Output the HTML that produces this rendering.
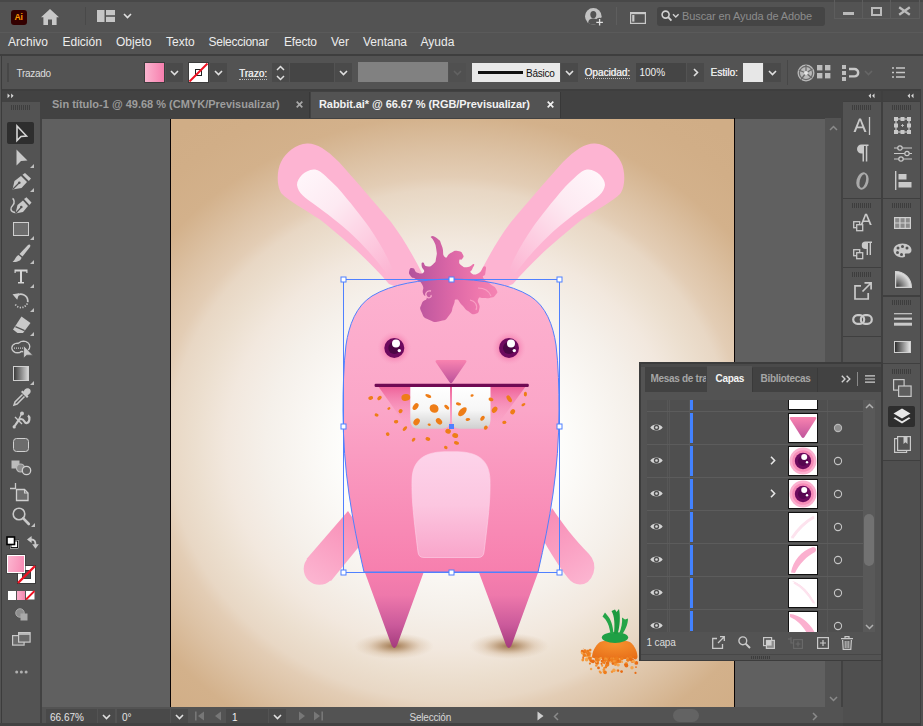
<!DOCTYPE html>
<html>
<head>
<meta charset="utf-8">
<title>Illustrator</title>
<style>
html,body{margin:0;padding:0;}
body{width:923px;height:726px;overflow:hidden;background:#535353;font-family:"Liberation Sans",sans-serif;font-size:12px;color:#e6e6e6;position:relative;}
.a{position:absolute;}
.t{position:absolute;white-space:nowrap;line-height:1;}
svg{position:absolute;overflow:visible;}

.mn{top:36px;font-size:12px;color:#ececec;}

.cb{top:67.6px;font-size:10px;color:#dedede;}
.cbl{border-bottom:1px dotted #bdbdbd;padding-bottom:0.8px;color:#e8e8e8;text-shadow:0.3px 0 0 #e8e8e8;}
.dd{background:#4a4a4a;}

.sb{top:713px;font-size:10px;color:#e4e4e4;}

.lt{top:374px;font-size:10px;font-weight:bold;letter-spacing:-0.3px;}
</style>
</head>
<body>
<!-- BASE REGIONS -->
<div class="a" id="titlebar" style="left:0;top:0;width:923px;height:32px;background:#535353;"></div>
<div class="a" id="menubar" style="left:0;top:32px;width:923px;height:22px;background:#535353;"></div>
<div class="a" style="left:0;top:54px;width:923px;height:2px;background:#3e3e3e;"></div>
<div class="a" id="ctrlbar" style="left:0;top:56px;width:923px;height:33px;background:#535353;"></div>
<div class="a" style="left:0;top:89px;width:923px;height:2px;background:#3e3e3e;"></div>


<!-- ===== TITLE BAR ===== -->
<div class="a" style="left:0;top:0;width:923px;height:2px;background:#484848;"></div>
<div class="a" style="left:11px;top:10px;width:16px;height:15px;background:#300;border-radius:3px;"></div>
<div class="t" style="left:14.6px;top:13.4px;font-size:8.6px;font-weight:bold;color:#ff9a00;letter-spacing:-0.2px;">Ai</div>
<svg style="left:41px;top:9px" width="18" height="16" viewBox="0 0 18 16"><path d="M9,0 L18,8.3 L15.6,8.3 L15.6,16 L11,16 L11,10.5 L7,10.5 L7,16 L2.4,16 L2.4,8.3 L0,8.3 Z" fill="#c8c8c8"/></svg>
<div class="a" style="left:85px;top:7px;width:1px;height:18px;background:#494949;"></div>
<svg style="left:97px;top:9.5px" width="18" height="12" viewBox="0 0 18 12"><rect x="0" y="0" width="7.5" height="12" fill="#c6c6c6"/><rect x="9" y="0" width="9" height="5.2" fill="#c6c6c6"/><rect x="9" y="6.8" width="9" height="5.2" fill="#c6c6c6"/></svg>
<svg style="left:122.5px;top:12.5px" width="9" height="6" viewBox="0 0 9 6"><path d="M1,1 L4.5,4.5 L8,1" stroke="#e0e0e0" stroke-width="1.6" fill="none"/></svg>
<!-- user icon -->
<svg style="left:584.5px;top:7.5px" width="20" height="19" viewBox="0 0 20 19"><circle cx="8.3" cy="8.3" r="8.3" fill="#c2c2c2"/><ellipse cx="8.3" cy="6.6" rx="3" ry="3.7" fill="#535353"/><path d="M3.2,14.8 C3.6,11.2 6,10.6 8.3,10.6 C10.6,10.6 13,11.2 13.4,14.8 C11.5,17 5.1,17 3.2,14.8Z" fill="#535353"/><circle cx="14.6" cy="14.2" r="4.4" fill="#535353"/><path d="M14.6,11 V17.6 M11.3,14.3 H17.9" stroke="#e0e0e0" stroke-width="1.3"/></svg>
<div class="a" style="left:616px;top:7px;width:1px;height:18px;background:#5e5e5e;"></div>
<svg style="left:630px;top:11.5px" width="16" height="12" viewBox="0 0 16 12"><rect x="0.6" y="0.6" width="14.8" height="10.8" fill="none" stroke="#c8c8c8" stroke-width="1.2"/><path d="M0.6,1.3 H15.4" stroke="#c8c8c8" stroke-width="1.8"/><rect x="2.2" y="3" width="2.2" height="6.6" fill="#c8c8c8"/></svg>
<div class="a" style="left:657px;top:7px;width:168px;height:19px;background:#454545;border-radius:3px;"></div>
<svg style="left:661px;top:10px" width="20" height="13" viewBox="0 0 20 13"><circle cx="4.6" cy="4.6" r="3.5" fill="none" stroke="#d0d0d0" stroke-width="1.6"/><path d="M7.2,7.2 L10.4,10.6" stroke="#d0d0d0" stroke-width="1.9"/><path d="M12,4.2 L14.8,7 L17.6,4.2" stroke="#d0d0d0" stroke-width="1.4" fill="none"/></svg>
<div class="t" style="left:682px;top:11px;font-size:11px;color:#8c8c8c;letter-spacing:-0.1px;">Buscar en Ayuda de Adobe</div>
<!-- window buttons -->
<div class="a" style="left:834px;top:-1px;width:86px;height:20px;border:1px solid #5d5d5d;box-sizing:border-box;"></div>
<div class="a" style="left:862px;top:0px;width:1px;height:18px;background:#5d5d5d;"></div>
<div class="a" style="left:890px;top:0px;width:1px;height:18px;background:#5d5d5d;"></div>
<div class="a" style="left:842.5px;top:12px;width:11px;height:3px;background:#bababa;"></div>
<div class="a" style="left:870.5px;top:6.5px;width:11px;height:9px;border:2px solid #bababa;border-top-width:2.5px;box-sizing:border-box;"></div>
<svg style="left:898px;top:6.5px" width="13" height="8" viewBox="0 0 13 8"><path d="M1.2,0.3 L11.8,7.7 M11.8,0.3 L1.2,7.7" stroke="#bababa" stroke-width="2.3"/></svg>
<div class="a" style="left:0;top:32px;width:923px;height:1px;background:#5a5a5a;"></div>

<!-- ===== MENU BAR ===== -->
<div class="t mn" style="left:8px;">Archivo</div>
<div class="t mn" style="left:62.5px;">Edición</div>
<div class="t mn" style="left:116px;">Objeto</div>
<div class="t mn" style="left:166px;">Texto</div>
<div class="t mn" style="left:208.5px;letter-spacing:-0.25px;">Seleccionar</div>
<div class="t mn" style="left:284px;letter-spacing:-0.2px;">Efecto</div>
<div class="t mn" style="left:331px;">Ver</div>
<div class="t mn" style="left:363px;">Ventana</div>
<div class="t mn" style="left:420.5px;">Ayuda</div>


<!-- ===== CONTROL BAR ===== -->
<div class="a" style="left:0;top:56px;width:2px;height:33px;background:#424242;"></div>
<div class="a" style="left:7px;top:63px;width:2px;height:18.5px;background:#474747;"></div>
<div class="t cb" style="left:16.5px;top:68.7px;letter-spacing:-0.3px;">Trazado</div>
<div class="a" style="left:145px;top:63px;width:19px;height:19px;background:linear-gradient(90deg,#fbb4cf,#f77fae);box-shadow:0 0 0 1px #3c3c3c;"></div>
<div class="a dd" style="left:166px;top:63px;width:17px;height:18.5px;"></div><svg style="left:170px;top:70px" width="9" height="6" viewBox="0 0 9 6"><path d="M1,1 L4.5,4.5 L8,1" stroke="#e0e0e0" stroke-width="1.6" fill="none"/></svg>
<div class="a" style="left:189px;top:63px;width:19px;height:19px;background:#fff;box-shadow:0 0 0 1px #3c3c3c;"></div>
<svg style="left:189px;top:63px" width="19" height="19" viewBox="0 0 19 19"><rect x="6.5" y="6.5" width="6" height="6" fill="none" stroke="#222" stroke-width="1"/><path d="M0.5,18.5 L18.5,0.5" stroke="#ee1122" stroke-width="2"/></svg>
<div class="a dd" style="left:210px;top:63px;width:17px;height:18.5px;"></div><svg style="left:214px;top:70px" width="9" height="6" viewBox="0 0 9 6"><path d="M1,1 L4.5,4.5 L8,1" stroke="#e0e0e0" stroke-width="1.6" fill="none"/></svg>
<div class="t cb cbl" style="left:239px;top:68.7px;">Trazo:</div>
<div class="a dd" style="left:272px;top:63px;width:17px;height:18.5px;"></div>
<svg style="left:276px;top:64.5px" width="9" height="16" viewBox="0 0 9 16"><path d="M1,5 L4.5,1.5 L8,5 M1,11 L4.5,14.5 L8,11" stroke="#e0e0e0" stroke-width="1.5" fill="none"/></svg>
<div class="a" style="left:290px;top:63px;width:44px;height:18.5px;background:#454545;"></div>
<div class="a dd" style="left:335px;top:63px;width:17px;height:18.5px;"></div><svg style="left:339px;top:70px" width="9" height="6" viewBox="0 0 9 6"><path d="M1,1 L4.5,4.5 L8,1" stroke="#e0e0e0" stroke-width="1.6" fill="none"/></svg>
<div class="a" style="left:358px;top:62.3px;width:90px;height:20px;background:#818181;"></div>
<div class="a" style="left:449px;top:63px;width:17px;height:18.5px;background:#505050;"></div><svg style="left:453px;top:70px" width="9" height="6" viewBox="0 0 9 6"><path d="M1,1 L4.5,4.5 L8,1" stroke="#626262" stroke-width="1.6" fill="none"/></svg>
<div class="a" style="left:472px;top:63px;width:88px;height:18.5px;background:#e9e9e9;"></div>
<div class="a" style="left:478px;top:71px;width:44.5px;height:3px;background:#111;"></div>
<div class="t" style="left:526px;top:68.5px;font-size:10px;color:#111;letter-spacing:-0.25px;">Básico</div>
<div class="a dd" style="left:561px;top:63px;width:17px;height:18.5px;"></div><svg style="left:565px;top:70px" width="9" height="6" viewBox="0 0 9 6"><path d="M1,1 L4.5,4.5 L8,1" stroke="#e0e0e0" stroke-width="1.6" fill="none"/></svg>
<div class="t cb cbl" style="left:584.5px;">Opacidad:</div>
<div class="a" style="left:636px;top:63px;width:50px;height:18.5px;background:#454545;"></div>
<div class="t cb" style="left:639.5px;color:#f0f0f0;">100%</div>
<div class="a dd" style="left:687px;top:63px;width:17px;height:18.5px;"></div>
<svg style="left:692.5px;top:68px" width="6" height="9" viewBox="0 0 6 9"><path d="M1,1 L4.5,4.5 L1,8" stroke="#e0e0e0" stroke-width="1.6" fill="none"/></svg>
<div class="t cb" style="left:710.5px;color:#e8e8e8;text-shadow:0.3px 0 0 #e8e8e8;">Estilo:</div>
<div class="a" style="left:743px;top:63px;width:20px;height:18.5px;background:#e7e7e7;"></div>
<div class="a dd" style="left:764px;top:63px;width:17px;height:18.5px;"></div><svg style="left:768px;top:70px" width="9" height="6" viewBox="0 0 9 6"><path d="M1,1 L4.5,4.5 L8,1" stroke="#e0e0e0" stroke-width="1.6" fill="none"/></svg>
<div class="a" style="left:787px;top:60px;width:1px;height:25px;background:#474747;"></div>
<!-- globe -->
<svg style="left:797px;top:63.5px" width="18" height="18" viewBox="0 0 18 18"><circle cx="9" cy="9" r="8.5" fill="#b9b9b9"/><circle cx="9" cy="9" r="6.6" fill="none" stroke="#6a6a6a" stroke-width="1.2"/><path d="M9,9 L9,1 M9,9 L15.5,5 M9,9 L15,14 M9,9 L4,15.5 M9,9 L1.6,6" stroke="#6a6a6a" stroke-width="1.3"/><circle cx="9" cy="9" r="2" fill="#e6e6e6"/></svg>
<svg style="left:817px;top:65px" width="14" height="14" viewBox="0 0 14 14"><rect x="0" y="0" width="5.4" height="5.4" fill="#bdbdbd"/><rect x="8" y="0" width="5.4" height="5.4" fill="#bdbdbd"/><rect x="0" y="8" width="5.4" height="5.4" fill="#bdbdbd"/><rect x="8" y="8" width="5.4" height="5.4" fill="#bdbdbd"/></svg>
<svg style="left:842px;top:64.5px" width="18" height="16" viewBox="0 0 18 16"><rect x="0" y="0" width="4" height="4" fill="#bdbdbd"/><rect x="0" y="6" width="4" height="4" fill="#bdbdbd"/><rect x="0" y="12" width="4" height="4" fill="#bdbdbd"/><path d="M7,4 H12.5 A3.6,3.6 0 0 1 12.5,11.4 H7" fill="none" stroke="#c8c8c8" stroke-width="2.4"/></svg>
<svg style="left:864px;top:70px" width="9" height="6" viewBox="0 0 9 6"><path d="M1,1 L4.5,4.5 L8,1" stroke="#666" stroke-width="1.6" fill="none"/></svg>
<svg style="left:892px;top:67px" width="13" height="11" viewBox="0 0 13 11"><path d="M0,1 H2 M4,1 H13 M0,5.5 H2 M4,5.5 H13 M0,10 H2 M4,10 H13" stroke="#c8c8c8" stroke-width="1.6"/></svg>

<!-- canvas area -->
<div class="a" id="paste" style="left:42px;top:118px;width:783px;height:589px;background:#606060;"></div>
<!-- tab strip -->
<div class="a" id="tabs" style="left:42px;top:91px;width:799px;height:27.6px;background:#424242;"></div>

<!-- ARTBOARD -->
<div class="a" id="art" style="left:171px;top:118px;width:564px;height:589px;overflow:hidden;background:#e8d6c0;">
<svg id="artsvg" style="left:0;top:0" width="564" height="589" viewBox="171 118 564 589">
<defs>
<radialGradient id="bg" cx="451" cy="445" r="400" gradientUnits="userSpaceOnUse" gradientTransform="translate(451 445) scale(1.1 1) translate(-451 -445)">
<stop offset="0" stop-color="#ffffff"/><stop offset="0.19" stop-color="#ffffff"/><stop offset="0.25" stop-color="#fdfdfb"/><stop offset="0.34" stop-color="#f9f6f2"/><stop offset="0.42" stop-color="#f5f0ea"/><stop offset="0.51" stop-color="#f2e8de"/><stop offset="0.58" stop-color="#ecdfcf"/><stop offset="0.64" stop-color="#e8d7c4"/><stop offset="0.67" stop-color="#e3cdb5"/><stop offset="0.74" stop-color="#dcc1a3"/><stop offset="0.825" stop-color="#d3b18b"/><stop offset="0.92" stop-color="#d1ae87"/><stop offset="1" stop-color="#d0ad86"/>
</radialGradient>
<linearGradient id="body" x1="0" y1="279" x2="0" y2="572" gradientUnits="userSpaceOnUse">
<stop offset="0" stop-color="#fdb2d0"/><stop offset="0.45" stop-color="#fba6c8"/><stop offset="1" stop-color="#f77fae"/>
</linearGradient>
<linearGradient id="leg" x1="0" y1="572" x2="0" y2="650" gradientUnits="userSpaceOnUse">
<stop offset="0" stop-color="#f67fae"/><stop offset="0.3" stop-color="#ee78ab"/><stop offset="0.68" stop-color="#cb5a9b"/><stop offset="1" stop-color="#a0387a"/>
</linearGradient>
<linearGradient id="armL" x1="355" y1="515" x2="312" y2="580" gradientUnits="userSpaceOnUse">
<stop offset="0" stop-color="#f88db6"/><stop offset="1" stop-color="#fcb4d0"/>
</linearGradient>
<linearGradient id="armR" x1="547" y1="515" x2="590" y2="580" gradientUnits="userSpaceOnUse">
<stop offset="0" stop-color="#f88db6"/><stop offset="1" stop-color="#fcb4d0"/>
</linearGradient>
<linearGradient id="earinL" x1="300" y1="175" x2="392" y2="272" gradientUnits="userSpaceOnUse">
<stop offset="0" stop-color="#fff6fa"/><stop offset="0.35" stop-color="#fdeaf2"/><stop offset="0.7" stop-color="#fdcde1"/><stop offset="1" stop-color="#fcb4d2"/>
</linearGradient>
<linearGradient id="hair" x1="410" y1="0" x2="496" y2="0" gradientUnits="userSpaceOnUse">
<stop offset="0" stop-color="#b4529c"/><stop offset="0.45" stop-color="#da66a6"/><stop offset="0.8" stop-color="#ef78ad"/><stop offset="1" stop-color="#f482b2"/>
</linearGradient>
<linearGradient id="nose" x1="0" y1="360" x2="0" y2="384" gradientUnits="userSpaceOnUse">
<stop offset="0" stop-color="#f983b0"/><stop offset="1" stop-color="#b9509a"/>
</linearGradient>
<linearGradient id="tooth" x1="0" y1="386" x2="0" y2="430" gradientUnits="userSpaceOnUse">
<stop offset="0" stop-color="#ffffff"/><stop offset="0.55" stop-color="#f6f6f6"/><stop offset="1" stop-color="#cdcdcd"/>
</linearGradient>
<linearGradient id="mouthsh" x1="0" y1="386" x2="0" y2="425" gradientUnits="userSpaceOnUse">
<stop offset="0" stop-color="#ee5f97"/><stop offset="1" stop-color="#f99ec3" stop-opacity="0"/>
</linearGradient>
<linearGradient id="tum" x1="0" y1="452" x2="0" y2="558" gradientUnits="userSpaceOnUse">
<stop offset="0" stop-color="#fdd3ea"/><stop offset="0.5" stop-color="#fcc6e0"/><stop offset="1" stop-color="#f9a5ca"/>
</linearGradient>
<radialGradient id="eyeglow" cx="0.5" cy="0.5" r="0.5">
<stop offset="0.5" stop-color="#f57fb0"/><stop offset="1" stop-color="#f99fc4" stop-opacity="0"/>
</radialGradient>
<radialGradient id="shad" cx="0.5" cy="0.5" r="0.5">
<stop offset="0" stop-color="#8a5a2a" stop-opacity="0.8"/><stop offset="0.3" stop-color="#9c6e3e" stop-opacity="0.55"/><stop offset="0.65" stop-color="#b88e60" stop-opacity="0.22"/><stop offset="1" stop-color="#c9a882" stop-opacity="0"/>
</radialGradient>
<radialGradient id="carrot" cx="0.5" cy="0.2" r="0.8">
<stop offset="0" stop-color="#f7922e"/><stop offset="1" stop-color="#e8701a"/>
</radialGradient>
</defs>
<rect x="171" y="118" width="564" height="589" fill="url(#bg)"/>
<!-- shadows -->
<ellipse cx="394" cy="646" rx="40" ry="13" fill="url(#shad)"/>
<ellipse cx="509" cy="646" rx="40" ry="13" fill="url(#shad)"/>
<!-- ears -->
<g id="earL">
<path d="M307,143.5 C316,143 326,149 339,162 C356,181 375,203 391,222 C403,238 413,255 425,279 L430,300 L389,284 C372,264 352,245 320,219.5 C305,210 288,200 282,194 C277,188 276,172 281,162 C286,152 296,144 307,143.5 Z" fill="#fdb4d2"/>
<path d="M313.5,169.5 C318,169 322,172 337,187 C350,202 362,217 369,227 C380,243 388,258 392,268 L389,277 C380,264 368,250 354,236.5 C340,223 326,213 314.5,204.5 C305,198 298,193 297,185 C297,178 305,170 313.5,169.5 Z" fill="url(#earinL)"/>
</g>
<g id="earR" transform="translate(902,0) scale(-1,1)">
<path d="M307,143.5 C316,143 326,149 339,162 C356,181 375,203 391,222 C403,238 413,255 425,279 L430,300 L389,284 C372,264 352,245 320,219.5 C305,210 288,200 282,194 C277,188 276,172 281,162 C286,152 296,144 307,143.5 Z" fill="#fdb4d2"/>
<path d="M313.5,169.5 C318,169 322,172 337,187 C350,202 362,217 369,227 C380,243 388,258 392,268 L389,277 C380,264 368,250 354,236.5 C340,223 326,213 314.5,204.5 C305,198 298,193 297,185 C297,178 305,170 313.5,169.5 Z" fill="url(#earinL)"/>
</g>
<!-- arms -->
<g id="armLg"><path d="M348,511 L306.5,559 L331,581 L366,538 Z" fill="url(#armL)"/><circle cx="319.5" cy="569" r="15.8" fill="url(#armL)"/></g>
<path d="M552,508 C562,523 575,540 589,554 Q596.5,562 593.5,573 Q589.5,584.5 580,584.5 Q573,584.5 568,578 C560,568 550,552 542,538 Z" fill="url(#armR)"/>
<!-- legs -->
<path d="M364,570 L424.5,570 L398.6,641 Q394.3,655 390,641 Z" fill="url(#leg)"/>
<path d="M478,570 L539,570 L513.1,641 Q508.8,655 504.5,641 Z" fill="url(#leg)"/>
<!-- body -->
<path id="bodyp" d="M451,279 C420,279.5 392,284 372,296 C356,306 349,325 346,345 C343.5,365 343,390 343,410 C343,470 352,520 364,572 L538,572 C550,520 559,470 559,410 C559,390 558.5,365 556,345 C553,325 546,306 530,296 C510,284 482,279.5 451,279 Z" fill="url(#body)"/>
<!-- tummy -->
<path d="M418,552 C414,520 411.5,500 412,480 C412.5,462 422,452 445,451.7 L457,451.7 C480,452 489.5,462 490,480 C490.5,500 488,520 484,552 Q483.5,557.5 478,557.5 L424,557.5 Q418.5,557.5 418,552 Z" fill="url(#tum)" stroke="#fdd4e9" stroke-opacity="0.6" stroke-width="1"/>
<!-- hair -->
<path id="hairp" d="M431.1,236.5 C432.3,235.5 434.0,235.6 437.6,238.7 C441.2,241.8 439.5,239.8 441.9,245.9 C444.3,252.0 441.9,254.6 444.8,257.0 C447.7,259.4 446.2,255.1 450.6,253.1 C455.0,251.1 453.8,250.5 457.9,251.0 C462.0,251.5 461.5,252.0 462.9,254.6 C464.3,257.2 463.4,257.0 462.2,258.9 C461.0,260.8 459.5,258.2 459.3,260.4 C459.1,262.6 458.6,263.2 461.5,265.4 C464.4,267.6 463.9,267.4 468.0,266.9 C472.1,266.4 472.4,263.3 473.8,264.0 C475.2,264.7 473.3,266.1 472.3,269.0 C471.3,271.9 469.0,271.2 470.9,272.7 C472.8,274.2 473.5,275.6 478.1,273.4 C482.7,271.2 482.2,266.2 484.6,266.2 C487.0,266.2 485.8,269.6 485.3,273.4 C484.8,277.2 481.7,274.3 483.2,277.7 C484.7,281.1 485.4,279.6 489.7,283.5 C494.0,287.4 494.3,285.4 496.2,289.3 C498.1,293.2 497.7,292.2 495.5,295.1 C493.3,298.0 493.6,297.0 489.7,298.0 C485.8,299.0 487.8,297.5 483.9,298.0 C480.0,298.5 479.6,296.0 478.1,299.4 C476.6,302.8 480.5,303.3 479.5,308.1 C478.5,312.9 479.0,312.9 475.2,313.9 C471.4,314.9 472.3,313.9 468.0,311.0 C463.7,308.1 466.1,309.1 462.2,305.2 C458.3,301.3 459.3,299.4 456.4,299.4 C453.5,299.4 455.9,299.9 453.5,305.2 C451.1,310.5 453.5,310.0 449.2,315.3 C444.9,320.6 447.3,319.6 440.5,321.1 C433.7,322.6 435.2,322.6 428.9,319.7 C422.6,316.8 424.1,317.7 421.7,312.4 C419.3,307.1 420.0,308.6 421.7,303.8 C423.4,299.0 426.3,301.4 426.8,298.0 C427.3,294.6 424.6,297.9 423.1,293.6 C421.6,289.3 424.8,289.8 422.4,285.0 C420.0,280.2 419.8,282.1 415.9,279.2 C412.0,276.3 413.0,279.2 410.8,276.3 C408.6,273.4 408.7,273.2 409.4,270.5 C410.1,267.8 410.3,267.6 413.0,268.3 C415.7,269.0 413.8,271.5 417.4,272.7 C421.0,273.9 422.5,274.1 423.9,271.9 C425.3,269.7 422.0,269.3 421.7,266.2 C421.4,263.1 421.4,262.5 423.1,262.5 C424.8,262.5 423.4,265.7 426.8,266.2 C430.2,266.7 430.2,266.9 433.3,264.0 C436.4,261.1 435.2,262.6 436.2,257.5 C437.2,252.4 436.9,254.1 436.2,248.8 C435.5,243.5 435.7,245.7 434.0,241.6 C432.3,237.5 429.9,237.5 431.1,236.5 Z" fill="url(#hair)"/>
<path d="M431,291 c-4,-1 -7,3 -4,6 c2,2 5,0 4,-2" fill="none" stroke="#f9a8cb" stroke-width="1.3"/>
<path d="M470,300 c5,1 8,5 6,10" fill="none" stroke="#f9a0c4" stroke-width="1.2"/>
<path d="M478,288 c6,0 11,3 13,8" fill="none" stroke="#f9a0c4" stroke-width="1.2"/>
<!-- eyes -->
<circle cx="394.3" cy="348" r="17" fill="url(#eyeglow)"/>
<circle cx="509" cy="348" r="17" fill="url(#eyeglow)"/>
<circle cx="394.3" cy="348" r="10" fill="#6d0a5e"/>
<circle cx="509" cy="348" r="10" fill="#6d0a5e"/>
<circle cx="394.3" cy="348" r="6" fill="#4a0644"/>
<circle cx="509" cy="348" r="6" fill="#4a0644"/>
<circle cx="396" cy="343.5" r="4" fill="#fff"/><circle cx="399.3" cy="350.6" r="1.7" fill="#fff"/>
<circle cx="511" cy="343.5" r="4" fill="#fff"/><circle cx="514.3" cy="350.6" r="1.7" fill="#fff"/>
<!-- nose -->
<path d="M437.5,360 L464.5,360 Q467.5,360 466,362.5 L452.6,382 Q451,384.5 449.4,382 L436,362.5 Q434.5,360 437.5,360 Z" fill="url(#nose)"/>
<!-- mouth -->
<path d="M378,386 L526,386 L498,424 L405,424 Z" fill="url(#mouthsh)"/>
<path d="M410.3,386 L450,386 L450,421 Q450,428.8 442,428.8 L419,428.8 Q410.3,428.8 410.3,420 Z" fill="url(#tooth)"/>
<path d="M452,386 L490.5,386 L490.5,420 Q490.5,428.8 482,428.8 L460,428.8 Q452,428.8 452,421 Z" fill="url(#tooth)"/>
<rect x="374.6" y="383.8" width="154.2" height="3.2" rx="1.2" fill="#700a54"/>
<ellipse cx="370.7" cy="398" rx="2.5" ry="1.8" transform="rotate(-19 370.7 398)" fill="#ee7d17"/>
<ellipse cx="379.5" cy="398" rx="2.5" ry="1.8" transform="rotate(-41 379.5 398)" fill="#ee7d17"/>
<ellipse cx="405.8" cy="397.4" rx="4.4" ry="3.4" transform="rotate(-10 405.8 397.4)" fill="#ee7d17"/>
<ellipse cx="428.3" cy="396" rx="3.2" ry="1.5" transform="rotate(23 428.3 396)" fill="#ee7d17"/>
<ellipse cx="415.6" cy="406.6" rx="3.8" ry="2.4" transform="rotate(-54 415.6 406.6)" fill="#ee7d17"/>
<ellipse cx="434.1" cy="408.5" rx="4.2" ry="4.6" transform="rotate(-51 434.1 408.5)" fill="#ee7d17"/>
<ellipse cx="446.8" cy="407.2" rx="3.0" ry="1.6" transform="rotate(45 446.8 407.2)" fill="#ee7d17"/>
<ellipse cx="458.5" cy="403.9" rx="2.6" ry="1.5" transform="rotate(8 458.5 403.9)" fill="#ee7d17"/>
<ellipse cx="462.4" cy="411.7" rx="5.5" ry="3.0" transform="rotate(-48 462.4 411.7)" fill="#ee7d17"/>
<ellipse cx="472.1" cy="395.5" rx="1.6" ry="1.2" transform="rotate(-14 472.1 395.5)" fill="#ee7d17"/>
<ellipse cx="491" cy="399.4" rx="2.5" ry="1.8" transform="rotate(14 491 399.4)" fill="#ee7d17"/>
<ellipse cx="494.6" cy="409.7" rx="3.4" ry="2.4" transform="rotate(-53 494.6 409.7)" fill="#ee7d17"/>
<ellipse cx="509.2" cy="398.8" rx="3.8" ry="2.0" transform="rotate(56 509.2 398.8)" fill="#ee7d17"/>
<ellipse cx="525.4" cy="394.1" rx="1.6" ry="2.4" transform="rotate(4 525.4 394.1)" fill="#ee7d17"/>
<ellipse cx="523.4" cy="404.6" rx="2.2" ry="1.3" transform="rotate(-33 523.4 404.6)" fill="#ee7d17"/>
<ellipse cx="512.7" cy="411.7" rx="2.8" ry="2.2" transform="rotate(-56 512.7 411.7)" fill="#ee7d17"/>
<ellipse cx="482.5" cy="418.3" rx="2.8" ry="1.8" transform="rotate(-49 482.5 418.3)" fill="#ee7d17"/>
<ellipse cx="467.8" cy="419.5" rx="2.2" ry="1.4" transform="rotate(-5 467.8 419.5)" fill="#ee7d17"/>
<ellipse cx="504.3" cy="422.4" rx="2.0" ry="1.6" transform="rotate(-7 504.3 422.4)" fill="#ee7d17"/>
<ellipse cx="485.8" cy="427.7" rx="2.2" ry="1.8" transform="rotate(-52 485.8 427.7)" fill="#ee7d17"/>
<ellipse cx="388.9" cy="408.5" rx="1.6" ry="1.2" transform="rotate(-30 388.9 408.5)" fill="#ee7d17"/>
<ellipse cx="400.6" cy="411.1" rx="2.2" ry="1.9" transform="rotate(-49 400.6 411.1)" fill="#ee7d17"/>
<ellipse cx="376.6" cy="415" rx="2.0" ry="1.6" transform="rotate(10 376.6 415)" fill="#ee7d17"/>
<ellipse cx="396.1" cy="421.8" rx="2.2" ry="1.7" transform="rotate(-6 396.1 421.8)" fill="#ee7d17"/>
<ellipse cx="416.6" cy="421.8" rx="3.8" ry="2.8" transform="rotate(-53 416.6 421.8)" fill="#ee7d17"/>
<ellipse cx="439" cy="421.4" rx="3.6" ry="2.6" transform="rotate(45 439 421.4)" fill="#ee7d17"/>
<ellipse cx="429.2" cy="424.7" rx="1.6" ry="1.2" transform="rotate(12 429.2 424.7)" fill="#ee7d17"/>
<ellipse cx="404.9" cy="428.6" rx="2.8" ry="1.5" transform="rotate(-45 404.9 428.6)" fill="#ee7d17"/>
<ellipse cx="387.7" cy="434.1" rx="1.8" ry="1.8" transform="rotate(-32 387.7 434.1)" fill="#ee7d17"/>
<ellipse cx="448.1" cy="431.2" rx="2.8" ry="2.4" transform="rotate(20 448.1 431.2)" fill="#ee7d17"/>
<ellipse cx="455.2" cy="435.5" rx="3.0" ry="2.4" transform="rotate(20 455.2 435.5)" fill="#ee7d17"/>
<ellipse cx="427.9" cy="439" rx="2.4" ry="1.8" transform="rotate(14 427.9 439)" fill="#ee7d17"/>
<ellipse cx="413.6" cy="439.7" rx="2.2" ry="1.5" transform="rotate(-53 413.6 439.7)" fill="#ee7d17"/>
<ellipse cx="456.5" cy="442.9" rx="2.6" ry="1.8" transform="rotate(13 456.5 442.9)" fill="#ee7d17"/>
<ellipse cx="445.8" cy="447.5" rx="1.8" ry="1.6" transform="rotate(14 445.8 447.5)" fill="#ee7d17"/>
<!-- carrot -->
<g id="carrot">
<path d="M592,657.5 C592,652 595,646 600,642 C604,639.5 626,639.5 630,642 C635,646 637.5,652 637.5,657.5 C630,660 600,660 592,657.5 Z" fill="url(#carrot)"/>
<ellipse cx="615" cy="637.5" rx="13.2" ry="5.4" fill="#1fa045"/>
<path d="M610.5,634 C609.5,626 607,620 602.5,616.5 L605,612.5 L607,615 C611,619 613,626 613.5,634 Z" fill="#25a548"/>
<path d="M614,634 C615,624 614.5,616 611.5,611 L615,609.5 L616.5,612 L619,609 C620.5,616 620,626 617.5,634 Z" fill="#1d9a40"/>
<path d="M619,634 C621.5,628 622.5,622 622,617.5 L625,619.5 L628,618.5 C628,625 625,630 622,635 Z" fill="#25a548"/>
<circle cx="603.8" cy="659.6" r="1.8" fill="#e86c14"/>
<circle cx="605.1" cy="657.8" r="1.4" fill="#ee7d1c"/>
<circle cx="599.0" cy="659.3" r="1.5" fill="#f39334"/>
<circle cx="602.5" cy="661.5" r="1.4" fill="#ee7d1c"/>
<circle cx="613.0" cy="663.5" r="1.4" fill="#e86c14"/>
<circle cx="607.6" cy="663.1" r="1.8" fill="#e86c14"/>
<circle cx="598.5" cy="660.5" r="1.1" fill="#ee7d1c"/>
<circle cx="598.5" cy="667.9" r="1.4" fill="#e86c14"/>
<circle cx="622.1" cy="662.1" r="1.0" fill="#f5a248"/>
<circle cx="591.1" cy="669.0" r="1.2" fill="#f5a248"/>
<circle cx="605.2" cy="660.2" r="1.5" fill="#e86c14"/>
<circle cx="600.7" cy="658.2" r="1.3" fill="#f5a248"/>
<circle cx="613.9" cy="670.4" r="1.8" fill="#f5a248"/>
<circle cx="620.3" cy="661.1" r="1.0" fill="#e86c14"/>
<circle cx="617.6" cy="670.5" r="1.2" fill="#f5a248"/>
<circle cx="630.8" cy="658.1" r="1.2" fill="#f5a248"/>
<circle cx="601.6" cy="663.8" r="1.1" fill="#e86c14"/>
<circle cx="589.1" cy="655.2" r="1.1" fill="#f5a248"/>
<circle cx="632.4" cy="661.7" r="1.3" fill="#e86c14"/>
<circle cx="630.6" cy="657.6" r="1.7" fill="#ee7d1c"/>
<circle cx="597.3" cy="663.2" r="1.8" fill="#f39334"/>
<circle cx="590.3" cy="653.3" r="1.1" fill="#f39334"/>
<circle cx="618.2" cy="670.7" r="1.1" fill="#e86c14"/>
<circle cx="582.2" cy="651.0" r="1.3" fill="#e86c14"/>
<circle cx="615.5" cy="659.0" r="1.8" fill="#ee7d1c"/>
<circle cx="618.0" cy="660.8" r="1.6" fill="#f5a248"/>
<circle cx="631.5" cy="660.2" r="1.7" fill="#f5a248"/>
<circle cx="603.9" cy="671.5" r="1.3" fill="#f5a248"/>
<circle cx="616.9" cy="659.9" r="1.1" fill="#f39334"/>
<circle cx="588.0" cy="651.0" r="1.5" fill="#ee7d1c"/>
<circle cx="582.0" cy="651.9" r="1.3" fill="#ee7d1c"/>
<circle cx="585.9" cy="652.6" r="1.1" fill="#f5a248"/>
<circle cx="590.2" cy="650.1" r="1.3" fill="#ee7d1c"/>
<circle cx="588.3" cy="656.5" r="1.4" fill="#f5a248"/>
<circle cx="608.4" cy="659.0" r="1.6" fill="#e86c14"/>
<circle cx="608.3" cy="661.1" r="1.6" fill="#ee7d1c"/>
<circle cx="583.3" cy="658.2" r="1.0" fill="#ee7d1c"/>
<circle cx="632.3" cy="660.1" r="1.7" fill="#e86c14"/>
<circle cx="602.2" cy="665.7" r="1.1" fill="#f39334"/>
<circle cx="611.3" cy="658.6" r="1.1" fill="#f39334"/>
<circle cx="626.3" cy="663.7" r="1.7" fill="#f39334"/>
<circle cx="593.0" cy="661.3" r="1.9" fill="#e86c14"/>
<circle cx="608.0" cy="658.0" r="1.1" fill="#ee7d1c"/>
<circle cx="636.3" cy="662.9" r="1.9" fill="#e86c14"/>
<circle cx="586.4" cy="656.3" r="1.2" fill="#f5a248"/>
<circle cx="616.3" cy="662.2" r="1.8" fill="#ee7d1c"/>
<circle cx="608.4" cy="664.7" r="1.0" fill="#ee7d1c"/>
<circle cx="632.0" cy="667.8" r="1.7" fill="#f5a248"/>
<circle cx="634.0" cy="661.5" r="1.6" fill="#f5a248"/>
<circle cx="604.1" cy="668.1" r="1.1" fill="#f39334"/>
<circle cx="583.5" cy="653.7" r="1.5" fill="#f5a248"/>
<circle cx="626.4" cy="665.5" r="1.9" fill="#e86c14"/>
<circle cx="590.6" cy="660.4" r="1.4" fill="#ee7d1c"/>
<circle cx="582.8" cy="660.0" r="1.4" fill="#f39334"/>
<circle cx="605.9" cy="659.3" r="1.8" fill="#f39334"/>
<circle cx="583.5" cy="651.9" r="1.7" fill="#e86c14"/>
<circle cx="596.3" cy="665.5" r="1.3" fill="#f39334"/>
<circle cx="585.3" cy="650.9" r="1.6" fill="#ee7d1c"/>
<circle cx="605.1" cy="672.4" r="1.8" fill="#ee7d1c"/>
<circle cx="589.2" cy="654.8" r="1.8" fill="#f39334"/>
<circle cx="615.5" cy="664.3" r="1.7" fill="#f39334"/>
<circle cx="591.5" cy="661.1" r="1.5" fill="#e86c14"/>
<circle cx="619.5" cy="659.4" r="1.4" fill="#f5a248"/>
<circle cx="625.1" cy="664.6" r="1.1" fill="#e86c14"/>
<circle cx="584.3" cy="655.5" r="1.0" fill="#f5a248"/>
<circle cx="612.9" cy="658.5" r="1.3" fill="#ee7d1c"/>
<circle cx="635.5" cy="672.9" r="1.1" fill="#e86c14"/>
<circle cx="606.9" cy="665.3" r="1.8" fill="#ee7d1c"/>
<circle cx="630.2" cy="659.2" r="1.8" fill="#e86c14"/>
<circle cx="632.8" cy="661.2" r="1.3" fill="#f5a248"/>
<circle cx="588.7" cy="652.9" r="1.3" fill="#ee7d1c"/>
<circle cx="618.9" cy="661.9" r="1.2" fill="#ee7d1c"/>
<circle cx="631.3" cy="659.6" r="1.1" fill="#e86c14"/>
<circle cx="589.9" cy="663.6" r="1.1" fill="#ee7d1c"/>
<circle cx="603.9" cy="669.8" r="1.4" fill="#f39334"/>
<circle cx="590.9" cy="657.7" r="1.2" fill="#f39334"/>
<circle cx="601.6" cy="661.0" r="1.0" fill="#e86c14"/>
<circle cx="583.1" cy="657.1" r="0.9" fill="#e86c14"/>
<circle cx="610.5" cy="660.0" r="1.2" fill="#ee7d1c"/>
<circle cx="588.2" cy="654.4" r="1.8" fill="#ee7d1c"/>
<circle cx="596.6" cy="660.0" r="0.9" fill="#f39334"/>
<circle cx="596.9" cy="662.5" r="1.8" fill="#e86c14"/>
<circle cx="604.3" cy="662.8" r="1.4" fill="#ee7d1c"/>
<circle cx="613.4" cy="658.4" r="1.0" fill="#f39334"/>
<circle cx="605.4" cy="660.4" r="1.0" fill="#ee7d1c"/>
<circle cx="616.9" cy="658.4" r="1.8" fill="#ee7d1c"/>
<circle cx="596.5" cy="660.3" r="1.0" fill="#ee7d1c"/>
<circle cx="600.7" cy="672.6" r="1.2" fill="#f39334"/>
<circle cx="584.4" cy="655.2" r="1.6" fill="#ee7d1c"/>
<circle cx="635.3" cy="657.8" r="1.8" fill="#e86c14"/>
<circle cx="611.2" cy="661.9" r="1.1" fill="#f5a248"/>
<circle cx="609.5" cy="660.3" r="0.9" fill="#e86c14"/>
<circle cx="584.0" cy="655.8" r="0.9" fill="#ee7d1c"/>
<circle cx="612.3" cy="660.4" r="1.8" fill="#ee7d1c"/>
<circle cx="618.2" cy="664.9" r="1.6" fill="#f5a248"/>
<circle cx="612.0" cy="671.7" r="1.2" fill="#f39334"/>
<circle cx="627.8" cy="660.2" r="1.3" fill="#e86c14"/>
<circle cx="636.0" cy="667.1" r="0.9" fill="#e86c14"/>
<circle cx="605.7" cy="667.2" r="1.3" fill="#ee7d1c"/>
<circle cx="618.9" cy="661.0" r="1.2" fill="#f39334"/>
<circle cx="620.1" cy="661.8" r="1.2" fill="#ee7d1c"/>
<circle cx="596.5" cy="658.8" r="1.9" fill="#ee7d1c"/>
<circle cx="599.8" cy="671.6" r="1.1" fill="#f39334"/>
<circle cx="582.1" cy="653.1" r="1.3" fill="#f5a248"/>
<circle cx="597.3" cy="660.4" r="1.7" fill="#ee7d1c"/>
<circle cx="596.5" cy="661.9" r="1.0" fill="#f5a248"/>
<circle cx="614.3" cy="662.1" r="1.5" fill="#ee7d1c"/>
<circle cx="614.2" cy="661.2" r="1.4" fill="#f39334"/>
<circle cx="618.2" cy="660.6" r="1.3" fill="#e86c14"/>
<circle cx="621.6" cy="671.6" r="1.4" fill="#e86c14"/>
<circle cx="621.8" cy="658.8" r="1.7" fill="#ee7d1c"/>
<circle cx="616.5" cy="659.1" r="1.6" fill="#ee7d1c"/>
<circle cx="589.7" cy="658.2" r="1.7" fill="#ee7d1c"/>
<circle cx="627.5" cy="658.7" r="1.5" fill="#f39334"/>
<circle cx="586.7" cy="659.6" r="1.9" fill="#f5a248"/>
<circle cx="628.0" cy="660.1" r="1.5" fill="#ee7d1c"/>
<path d="M583,648 l3,6 l2,-1 z" fill="#ee7d1f"/>
</g>
<!-- selection -->
<g fill="none" stroke="#4f80ff" stroke-width="1"><path d="M451,279 C420,279.5 392,284 372,296 C356,306 349,325 346,345 C343.5,365 343,390 343,410 C343,470 352,520 364,572 L538,572 C550,520 559,470 559,410 C559,390 558.5,365 556,345 C553,325 546,306 530,296 C510,284 482,279.5 451,279 Z"/><rect x="343.5" y="279.5" width="216" height="293"/></g><rect x="341" y="277" width="5" height="5" fill="#fff" stroke="#4f80ff" stroke-width="1"/><rect x="449" y="277" width="5" height="5" fill="#fff" stroke="#4f80ff" stroke-width="1"/><rect x="557" y="277" width="5" height="5" fill="#fff" stroke="#4f80ff" stroke-width="1"/><rect x="341" y="424" width="5" height="5" fill="#fff" stroke="#4f80ff" stroke-width="1"/><rect x="557" y="424" width="5" height="5" fill="#fff" stroke="#4f80ff" stroke-width="1"/><rect x="341" y="570" width="5" height="5" fill="#fff" stroke="#4f80ff" stroke-width="1"/><rect x="449" y="570" width="5" height="5" fill="#fff" stroke="#4f80ff" stroke-width="1"/><rect x="557" y="570" width="5" height="5" fill="#fff" stroke="#4f80ff" stroke-width="1"/><rect x="449" y="424" width="5" height="5" fill="#4f80ff"/>
</svg>
</div>


<!-- ===== DOC TABS ===== -->
<div class="a" style="left:311px;top:92px;width:249px;height:26.6px;background:#535353;"></div>
<div class="a" style="left:309px;top:92px;width:1px;height:26px;background:#383838;"></div>
<div class="a" style="left:560px;top:92px;width:1px;height:26px;background:#383838;"></div>
<div class="t" style="left:52px;top:99px;font-size:11px;font-weight:bold;color:#9d9d9d;">Sin título-1 @ 49.68 % (CMYK/Previsualizar)</div>
<svg style="left:296px;top:101px" width="7" height="7" viewBox="0 0 7 7"><path d="M0.7,0.7 L6.3,6.3 M6.3,0.7 L0.7,6.3" stroke="#a8a8a8" stroke-width="1.7"/></svg>
<div class="t" style="left:319px;top:99px;font-size:11px;font-weight:bold;color:#f2f2f2;letter-spacing:-0.07px;">Rabbit.ai* @ 66.67 % (RGB/Previsualizar)</div>
<svg style="left:546.5px;top:101px" width="7" height="7" viewBox="0 0 7 7"><path d="M0.7,0.7 L6.3,6.3 M6.3,0.7 L0.7,6.3" stroke="#f0f0f0" stroke-width="1.7"/></svg>
<!-- vertical scrollbar of canvas -->
<div class="a" style="left:825px;top:118px;width:16px;height:589px;background:#535353;"></div>
<svg style="left:828.5px;top:125px" width="9" height="6" viewBox="0 0 9 6"><path d="M1,5 L4.5,1.5 L8,5" stroke="#8a8a8a" stroke-width="1.5" fill="none"/></svg>
<svg style="left:828.5px;top:696px" width="9" height="6" viewBox="0 0 9 6"><path d="M1,1 L4.5,4.5 L8,1" stroke="#8a8a8a" stroke-width="1.5" fill="none"/></svg>
<div class="a" style="left:841px;top:91px;width:2px;height:635px;background:#424242;"></div>

<div class="a" style="left:170px;top:118px;width:1px;height:589px;background:#0a0404;"></div>
<div class="a" style="left:170px;top:118px;width:565px;height:0.6px;background:#424242;"></div>
<div class="a" style="left:734px;top:118px;width:1px;height:589px;background:#0a0404;"></div>
<!-- LEFT TOOLBAR -->
<div class="a" id="ltool" style="left:0;top:91px;width:42px;height:635px;background:#424242;"></div>
<div class="a" style="left:2px;top:102px;width:38px;height:624px;background:#535353;"></div>


<div class="a" style="left:0;top:56px;width:1px;height:670px;background:#535353;"></div><div class="a" style="left:1px;top:56px;width:1.2px;height:670px;background:#3c3c3c;"></div>
<!-- ===== LEFT TOOLBAR CONTENT ===== -->
<svg style="left:6.8px;top:92.8px" width="7.5" height="5.6" viewBox="0 0 9 7"><path d="M0.5,0.5 L3.5,3.5 L0.5,6.5Z M5,0.5 L8,3.5 L5,6.5Z" fill="#d8d8d8"/></svg>
<div class="a" style="left:11px;top:105px;width:20px;height:5px;background:repeating-linear-gradient(90deg,#3d3d3d 0,#3f3f3f 1px,transparent 1px,transparent 2px);"></div>
<div class="a" style="left:7px;top:122px;width:27px;height:22px;background:#2e2e2e;border-radius:2px;"></div>
<!-- selection -->
<svg style="left:16px;top:125px" width="12" height="18" viewBox="0 0 12 18"><path d="M1,1 L1,15.5 L5,11.5 L10.5,11 Z" fill="none" stroke="#d6d6d6" stroke-width="1.6" stroke-linejoin="miter"/></svg>
<!-- direct selection -->
<svg style="left:16px;top:148.5px" width="12" height="18" viewBox="0 0 12 18"><path d="M0.5,0.5 L0.5,16.5 L5,12 L11.5,11.5 Z" fill="#c9c9c9"/></svg><svg style="left:30px;top:164px" width="4" height="4" viewBox="0 0 4 4"><path d="M4,0 V4 H0Z" fill="#c0c0c0"/></svg>
<!-- pen -->
<svg style="left:12px;top:173px" width="20" height="17" viewBox="0 0 20 17"><path d="M0.5,16.5 L2.5,8 L9,3 L15,9 L9.5,15 Z" fill="#c9c9c9"/><path d="M1,16 L7,10" stroke="#535353" stroke-width="1.2"/><circle cx="7.3" cy="9.7" r="1.3" fill="#535353"/><path d="M10.5,1.8 L13,0 L19,5.5 L16.8,8 Z" fill="#c9c9c9"/></svg><svg style="left:30px;top:188px" width="4" height="4" viewBox="0 0 4 4"><path d="M4,0 V4 H0Z" fill="#c0c0c0"/></svg>
<!-- curvature -->
<svg style="left:10px;top:197px" width="22" height="17" viewBox="0 0 22 17"><path d="M5.5,16.5 L7.5,8 L13,3.5 L18,9 L13,15 Z" fill="#c9c9c9"/><path d="M6,16 L11,10.5" stroke="#535353" stroke-width="1.2"/><circle cx="11.3" cy="10" r="1.3" fill="#535353"/><path d="M14,2 L16.5,0.3 L21.5,5.5 L19.5,8 Z" fill="#c9c9c9"/><path d="M5,15.5 C0,15 0,11 3,8 C5,6 4,2 2.5,1.5" fill="none" stroke="#c9c9c9" stroke-width="1.5"/></svg>
<!-- rectangle -->
<div class="a" style="left:13px;top:222px;width:16px;height:14px;box-sizing:border-box;border:1.4px solid #cfcfcf;background:#6c6c6c;"></div><svg style="left:30px;top:236px" width="4" height="4" viewBox="0 0 4 4"><path d="M4,0 V4 H0Z" fill="#c0c0c0"/></svg>
<!-- brush -->
<svg style="left:12px;top:244px" width="19" height="19" viewBox="0 0 19 19"><path d="M17.5,0.5 C18.5,1 18.6,2 18,3 L10.5,12.5 L7.5,10 L16,1 C16.5,0.5 17,0.3 17.5,0.5Z" fill="#c9c9c9"/><path d="M6.5,11 L9.5,13.5 C9.5,16.5 5,18.5 0.5,18 C3,16.5 3,13 6.5,11Z" fill="#c9c9c9"/></svg><svg style="left:30px;top:260px" width="4" height="4" viewBox="0 0 4 4"><path d="M4,0 V4 H0Z" fill="#c0c0c0"/></svg>
<!-- type -->
<svg style="left:14px;top:269px" width="14" height="15" viewBox="0 0 14 15"><path d="M0.5,0.5 H13.5 V4 H12.3 V2.4 H8 V13 H10 V14.5 H4 V13 H6 V2.4 H1.7 V4 H0.5Z" fill="#d6d6d6"/></svg><svg style="left:30px;top:284px" width="4" height="4" viewBox="0 0 4 4"><path d="M4,0 V4 H0Z" fill="#c0c0c0"/></svg>
<!-- rotate -->
<svg style="left:12px;top:292px" width="18" height="18" viewBox="0 0 18 18"><path d="M4.2,4.2 A6.8,6.8 0 0 1 15.8,9" fill="none" stroke="#c9c9c9" stroke-width="1.7"/><path d="M15.8,9 A6.8,6.8 0 0 1 3,12" fill="none" stroke="#c9c9c9" stroke-width="1.7" stroke-dasharray="1.2 1.4"/><path d="M0.5,2.2 L7.2,1.2 L5.2,7.8Z" fill="#c9c9c9"/></svg><svg style="left:30px;top:308px" width="4" height="4" viewBox="0 0 4 4"><path d="M4,0 V4 H0Z" fill="#c0c0c0"/></svg>
<!-- eraser -->
<svg style="left:12px;top:316px" width="19" height="18" viewBox="0 0 19 18"><path d="M9.5,0.5 L18.5,7 L11,17 L5.5,17 L1,13.5 Z" fill="#c9c9c9"/><path d="M3.4,10.6 L12.6,14.6" stroke="#535353" stroke-width="1.3"/></svg><svg style="left:30px;top:332px" width="4" height="4" viewBox="0 0 4 4"><path d="M4,0 V4 H0Z" fill="#c0c0c0"/></svg>
<!-- shape builder -->
<svg style="left:11px;top:340px" width="23" height="19" viewBox="0 0 23 19"><ellipse cx="6.5" cy="8" rx="5.6" ry="4.8" fill="none" stroke="#c9c9c9" stroke-width="1.5"/><ellipse cx="12.5" cy="6.5" rx="6.2" ry="5.2" fill="none" stroke="#c9c9c9" stroke-width="1.5"/><ellipse cx="6.5" cy="8" rx="4.85" ry="4.05" fill="#535353"/><ellipse cx="12.5" cy="6.5" rx="5.45" ry="4.45" fill="#535353"/><path d="M3,8.2 H13" stroke="#c9c9c9" stroke-width="1.3" stroke-dasharray="1 1"/><path d="M12.6,5.6 L12.6,18.2 L15.8,15.2 L21.8,15.2 Z" fill="#c9c9c9" stroke="#535353" stroke-width="0.8"/></svg>
<!-- gradient -->
<div class="a" style="left:13px;top:366px;width:16px;height:15px;box-sizing:border-box;border:1.3px solid #cfcfcf;background:linear-gradient(90deg,#3c3c3c,#d4d4d4);"></div><svg style="left:30px;top:381px" width="4" height="4" viewBox="0 0 4 4"><path d="M4,0 V4 H0Z" fill="#c0c0c0"/></svg>
<!-- eyedropper -->
<svg style="left:12px;top:388px" width="19" height="19" viewBox="0 0 19 19"><path d="M13,1.2 C14.5,-0.3 17,0 18,1.3 C19,2.5 19,4.5 17.5,5.8 L15.5,7.5 L16.5,8.6 L15,10 L9,4 L10.4,2.6 L11.4,3.5Z" fill="#c9c9c9"/><path d="M10.5,6.5 L3,14 L2,17 L5,16 L12.5,8.5" fill="none" stroke="#c9c9c9" stroke-width="1.5"/></svg>
<!-- warp/width -->
<svg style="left:12px;top:411px" width="20" height="18" viewBox="0 0 20 18"><path d="M1,16 C5,15 5,8 9,8 C13,8 12,13 15,12 C18,11 18,6 16,4.5" fill="none" stroke="#c9c9c9" stroke-width="2.2"/><path d="M3,6 L10,13 M10,2 L5,12" stroke="#c9c9c9" stroke-width="1.4"/><circle cx="10" cy="2.6" r="2" fill="#c9c9c9"/><circle cx="2.2" cy="16" r="1.6" fill="#c9c9c9"/></svg>
<!-- rounded rect -->
<div class="a" style="left:13px;top:438px;width:16px;height:14px;box-sizing:border-box;border:1.4px solid #cfcfcf;border-radius:3.5px;background:#6c6c6c;"></div>
<!-- shapes (blend) -->
<svg style="left:11px;top:460px" width="21" height="16" viewBox="0 0 21 16"><rect x="0.5" y="0.5" width="8" height="8" fill="#bcbcbc"/><circle cx="9.5" cy="8" r="4" fill="#8d8d8d" stroke="#bcbcbc" stroke-width="1.2"/><circle cx="15.5" cy="10.5" r="4.2" fill="#5e5e5e" stroke="#cfcfcf" stroke-width="1.3"/></svg>
<!-- artboard -->
<svg style="left:10px;top:483px" width="19" height="18" viewBox="0 0 19 18"><path d="M5.5,0 V6 M0,5.5 H6" stroke="#c9c9c9" stroke-width="1.3"/><path d="M6.5,6.5 H14.5 L18,10 V17.5 H6.5Z" fill="#6c6c6c" stroke="#cfcfcf" stroke-width="1.3"/><path d="M14.5,6.5 V10 H18" fill="none" stroke="#cfcfcf" stroke-width="1.1"/></svg>
<!-- zoom -->
<svg style="left:12px;top:507px" width="19" height="19" viewBox="0 0 19 19"><circle cx="7" cy="7" r="5.8" fill="none" stroke="#c9c9c9" stroke-width="1.6"/><path d="M11.3,11.3 L16.8,17" stroke="#c9c9c9" stroke-width="2.6" stroke-linecap="round"/></svg><svg style="left:31px;top:523px" width="4" height="4" viewBox="0 0 4 4"><path d="M4,0 V4 H0Z" fill="#c0c0c0"/></svg>
<!-- default fill/stroke + swap -->
<svg style="left:6px;top:536px" width="13" height="13" viewBox="0 0 13 13"><rect x="4.5" y="4.5" width="7.5" height="7.5" fill="#fff" stroke="#000" stroke-width="1.8"/><rect x="4.2" y="4.2" width="8.1" height="8.1" fill="none" stroke="#fff" stroke-width="0.6"/><rect x="1" y="1" width="7.5" height="7.5" fill="#fff" stroke="#000" stroke-width="1.6"/></svg>
<svg style="left:26.5px;top:536px" width="12" height="13" viewBox="0 0 12 13"><path d="M3.5,3.5 C7.5,3 8.7,5.5 8.5,9" fill="none" stroke="#c9c9c9" stroke-width="1.9"/><path d="M0,3.6 L4.6,0 L4.6,7Z" fill="#c9c9c9"/><path d="M5.2,8.2 L11.8,8.2 L8.5,12.8Z" fill="#c9c9c9"/></svg>
<!-- stroke swatch -->
<svg style="left:16.5px;top:564.5px" width="19" height="19" viewBox="0 0 19 19"><rect x="0.5" y="0.5" width="18" height="18" fill="#fff" stroke="#3a3a3a" stroke-width="1"/><rect x="5.5" y="5.5" width="8" height="8" fill="#535353" stroke="#3a3a3a"/><path d="M1,18 L18,1" stroke="#ee1122" stroke-width="2.4"/></svg>
<!-- fill swatch -->
<div class="a" style="left:7px;top:555px;width:18px;height:18px;box-sizing:border-box;border:1px solid #fff;background:linear-gradient(100deg,#fcb6d0,#f88ab4);box-shadow:0 0 0 0.6px #3a3a3a;"></div>
<!-- 3 boxes -->
<div class="a" style="left:8px;top:591px;width:8px;height:8.5px;background:#fff;"></div>
<div class="a" style="left:17px;top:591px;width:8px;height:8.5px;background:linear-gradient(90deg,#fbb0cc,#f487b0);"></div>
<svg style="left:26px;top:591px" width="8.5" height="8.5" viewBox="0 0 8.5 8.5"><rect width="8.5" height="8.5" fill="#fff"/><path d="M0,8.5 L8.5,0" stroke="#ee1122" stroke-width="1.8"/></svg>
<!-- draw mode -->
<svg style="left:15px;top:608px" width="13" height="13" viewBox="0 0 13 13"><circle cx="5" cy="5" r="4.3" fill="#8e8e8e" stroke="#b8b8b8" stroke-width="0.8"/><rect x="5.5" y="5.5" width="7" height="7" fill="#a9a9a9"/></svg>
<!-- screen mode -->
<svg style="left:12px;top:631.5px" width="19" height="14" viewBox="0 0 19 14"><rect x="0.6" y="3.6" width="11.5" height="9.5" fill="#6a6a6a" stroke="#c9c9c9" stroke-width="1.2"/><rect x="6.6" y="0.6" width="11.5" height="9.5" fill="#6a6a6a" stroke="#c9c9c9" stroke-width="1.2"/><path d="M6.6,2 H18.1" stroke="#c9c9c9" stroke-width="1.6"/></svg>
<!-- dots -->
<svg style="left:15px;top:669.5px" width="13" height="4" viewBox="0 0 13 4"><circle cx="1.7" cy="2" r="1.5" fill="#b0b0b0"/><circle cx="6.4" cy="2" r="1.5" fill="#b0b0b0"/><circle cx="11.1" cy="2" r="1.5" fill="#b0b0b0"/></svg>

<!-- STATUS BAR -->
<div class="a" id="status" style="left:42px;top:707px;width:801px;height:19px;background:#535353;"></div>


<!-- ===== STATUS BAR ===== -->
<div class="a" style="left:0;top:723px;width:923px;height:3px;background:#424242;"></div>
<div class="a" style="left:46px;top:709px;width:51px;height:14px;background:#494949;"></div>
<div class="t sb" style="left:50px;">66.67%</div>
<div class="a dd" style="left:98px;top:709px;width:17px;height:14px;"></div><svg style="left:102px;top:714px" width="9" height="6" viewBox="0 0 9 6"><path d="M1,1 L4.5,4.5 L8,1" stroke="#e0e0e0" stroke-width="1.6" fill="none"/></svg>
<div class="a" style="left:117px;top:709px;width:53px;height:14px;background:#494949;"></div>
<div class="t sb" style="left:122px;">0°</div>
<div class="a dd" style="left:171px;top:709px;width:17px;height:14px;"></div><svg style="left:175px;top:714px" width="9" height="6" viewBox="0 0 9 6"><path d="M1,1 L4.5,4.5 L8,1" stroke="#e0e0e0" stroke-width="1.6" fill="none"/></svg>
<svg style="left:195px;top:711px" width="28" height="10" viewBox="0 0 28 10"><path d="M0.8,0.5 V9.5" stroke="#777" stroke-width="1.6"/><path d="M9,0.5 L3,5 L9,9.5Z" fill="#777"/><path d="M26,0.5 L20,5 L26,9.5Z" fill="#777"/></svg>
<div class="a" style="left:226px;top:709px;width:42px;height:14px;background:#494949;"></div>
<div class="t sb" style="left:232px;color:#f0f0f0;">1</div>
<div class="a dd" style="left:269px;top:709px;width:17px;height:14px;"></div><svg style="left:273px;top:714px" width="9" height="6" viewBox="0 0 9 6"><path d="M1,1 L4.5,4.5 L8,1" stroke="#e0e0e0" stroke-width="1.6" fill="none"/></svg>
<svg style="left:297px;top:711px" width="28" height="10" viewBox="0 0 28 10"><path d="M2,0.5 L8,5 L2,9.5Z" fill="#777"/><path d="M17,0.5 L23,5 L17,9.5Z" fill="#777"/><path d="M25.2,0.5 V9.5" stroke="#777" stroke-width="1.6"/></svg>
<div class="t sb" style="left:409.5px;color:#d8d8d8;letter-spacing:-0.2px;">Selección</div>
<svg style="left:537px;top:711px" width="7" height="10" viewBox="0 0 7 10"><path d="M0.5,0.5 L6.5,5 L0.5,9.5Z" fill="#cfcfcf"/></svg>
<div class="a" style="left:548px;top:708px;width:277px;height:15px;background:#535353;"></div>
<svg style="left:553px;top:711.5px" width="6" height="9" viewBox="0 0 6 9"><path d="M5,1 L1.5,4.5 L5,8" stroke="#8a8a8a" stroke-width="1.5" fill="none"/></svg>
<svg style="left:812px;top:711.5px" width="6" height="9" viewBox="0 0 6 9"><path d="M1,1 L4.5,4.5 L1,8" stroke="#8a8a8a" stroke-width="1.5" fill="none"/></svg>
<div class="a" style="left:673px;top:709px;width:26px;height:13px;background:#636363;border-radius:6.5px;"></div>
<div class="a" style="left:825px;top:707px;width:16px;height:16px;background:#535353;"></div>

<!-- RIGHT DOCK -->



<!-- ===== RIGHT DOCK CONTENT ===== -->
<div class="a" style="left:843px;top:91px;width:80px;height:635px;background:#3f3f3f;"></div>
<!-- col1 groups -->
<div class="a" style="left:843px;top:91px;width:38px;height:10px;background:#424242;"></div>
<div class="a" style="left:883px;top:91px;width:37px;height:10px;background:#424242;"></div>
<svg style="left:866.5px;top:92.8px" width="8.6" height="5.6" viewBox="0 0 9 7"><path d="M4,0.5 L1,3.5 L4,6.5Z M8.5,0.5 L5.5,3.5 L8.5,6.5Z" fill="#d8d8d8"/></svg>
<svg style="left:906.3px;top:92.8px" width="8.6" height="5.6" viewBox="0 0 9 7"><path d="M4,0.5 L1,3.5 L4,6.5Z M8.5,0.5 L5.5,3.5 L8.5,6.5Z" fill="#d8d8d8"/></svg>
<div class="a" style="left:843px;top:102px;width:38px;height:96px;background:#535353;"></div>
<div class="a" style="left:843px;top:199px;width:38px;height:68px;background:#535353;"></div>
<div class="a" style="left:843px;top:268px;width:38px;height:68px;background:#535353;"></div>
<div class="a" style="left:843px;top:337px;width:38px;height:25px;background:#535353;"></div>
<div class="a" style="left:843px;top:660px;width:38px;height:63px;background:#4f4f4f;"></div>
<!-- col2 groups -->
<div class="a" style="left:883px;top:102px;width:37px;height:96px;background:#535353;"></div>
<div class="a" style="left:883px;top:199px;width:37px;height:96px;background:#535353;"></div>
<div class="a" style="left:883px;top:297px;width:37px;height:66px;background:#535353;"></div>
<div class="a" style="left:883px;top:364px;width:37px;height:96px;background:#535353;"></div>
<div class="a" style="left:883px;top:461px;width:37px;height:262px;background:#4f4f4f;"></div>
<div class="a" style="left:852px;top:105px;width:20px;height:5px;background:repeating-linear-gradient(90deg,#3d3d3d 0,#3d3d3d 1px,transparent 1px,transparent 2px);"></div><div class="a" style="left:892px;top:105px;width:20px;height:5px;background:repeating-linear-gradient(90deg,#3d3d3d 0,#3d3d3d 1px,transparent 1px,transparent 2px);"></div><div class="a" style="left:852px;top:203px;width:20px;height:5px;background:repeating-linear-gradient(90deg,#3d3d3d 0,#3d3d3d 1px,transparent 1px,transparent 2px);"></div><div class="a" style="left:892px;top:203px;width:20px;height:5px;background:repeating-linear-gradient(90deg,#3d3d3d 0,#3d3d3d 1px,transparent 1px,transparent 2px);"></div><div class="a" style="left:852px;top:272px;width:20px;height:5px;background:repeating-linear-gradient(90deg,#3d3d3d 0,#3d3d3d 1px,transparent 1px,transparent 2px);"></div><div class="a" style="left:892px;top:300px;width:20px;height:5px;background:repeating-linear-gradient(90deg,#3d3d3d 0,#3d3d3d 1px,transparent 1px,transparent 2px);"></div><div class="a" style="left:892px;top:369px;width:20px;height:5px;background:repeating-linear-gradient(90deg,#3d3d3d 0,#3d3d3d 1px,transparent 1px,transparent 2px);"></div>
<div class="a" style="left:921.3px;top:89px;width:1.7px;height:637px;background:#505050;"></div>
<!-- col1 icons -->
<svg style="left:853px;top:117px" width="20" height="18" viewBox="0 0 20 18"><path d="M0.5,15 L6,1.5 H8 L13.5,15 H11.3 L9.9,11.2 H4.1 L2.7,15Z M4.8,9.4 H9.2 L7,3.6Z" fill="#c9c9c9"/><path d="M16.5,0 V18" stroke="#c9c9c9" stroke-width="1.3"/></svg>
<svg style="left:856px;top:144px" width="13" height="18" viewBox="0 0 13 18"><path d="M5.5,0.5 H12.5 V2 H11.3 V17.5 H9.8 V2 H8 V17.5 H6.5 V9.5 H5.5 A4.5,4.5 0 0 1 5.5,0.5Z" fill="#c9c9c9"/></svg>
<svg style="left:854px;top:171px" width="17" height="20" viewBox="0 0 17 20"><ellipse cx="8.5" cy="10" rx="6" ry="8.8" transform="rotate(14 8.5 10)" fill="#a9a9a9"/><ellipse cx="8.8" cy="10" rx="3" ry="7" transform="rotate(14 8.8 10)" fill="#535353"/></svg>
<svg style="left:853px;top:213px" width="20" height="19" viewBox="0 0 20 19"><path d="M7.5,12 L12,0.8 H14 L18.8,12 H16.8 L15.6,9 H10.5 L9.4,12Z M11.1,7.4 H15 L13,2.6Z" fill="#c9c9c9"/><rect x="0.7" y="8.7" width="6" height="6" fill="none" stroke="#c9c9c9" stroke-width="1.3"/><rect x="3.7" y="11.7" width="6" height="6" fill="#535353" stroke="#c9c9c9" stroke-width="1.3"/></svg>
<svg style="left:853px;top:241px" width="20" height="19" viewBox="0 0 20 19"><path d="M12.5,0.5 H19 V2 H18 V14 H16.6 V2 H15 V14 H13.6 V8 H12.5 A3.75,3.75 0 0 1 12.5,0.5Z" fill="#c9c9c9"/><rect x="0.7" y="8.7" width="6" height="6" fill="none" stroke="#c9c9c9" stroke-width="1.3"/><rect x="3.7" y="11.7" width="6" height="6" fill="#535353" stroke="#c9c9c9" stroke-width="1.3"/></svg>
<svg style="left:854px;top:282px" width="18" height="18" viewBox="0 0 18 18"><path d="M7,3.8 H1 V17 H14.2 V11" fill="none" stroke="#c9c9c9" stroke-width="1.7"/><path d="M8.5,9.5 L16.5,1.5 M10.5,0.9 H17.1 V7.5" fill="none" stroke="#c9c9c9" stroke-width="1.7"/></svg>
<svg style="left:852px;top:314px" width="21" height="11" viewBox="0 0 21 11"><rect x="1.2" y="1.2" width="11" height="8.6" rx="4.3" fill="none" stroke="#c9c9c9" stroke-width="2.2"/><rect x="8.8" y="1.2" width="11" height="8.6" rx="4.3" fill="none" stroke="#c9c9c9" stroke-width="2.2"/></svg>
<!-- col2 icons -->
<svg style="left:894px;top:117px" width="17" height="17" viewBox="0 0 17 17"><rect x="2" y="2" width="13" height="13" fill="none" stroke="#c9c9c9" stroke-width="1.2"/><g fill="#c9c9c9"><rect x="0" y="0" width="4" height="4"/><rect x="6.5" y="0" width="4" height="4"/><rect x="13" y="0" width="4" height="4"/><rect x="0" y="6.5" width="4" height="4"/><rect x="13" y="6.5" width="4" height="4"/><rect x="0" y="13" width="4" height="4"/><rect x="6.5" y="13" width="4" height="4"/><rect x="13" y="13" width="4" height="4"/></g><path d="M8.5,7 V10 M7,8.5 H10" stroke="#c9c9c9" stroke-width="0.8"/></svg>
<svg style="left:894px;top:145px" width="18" height="17" viewBox="0 0 18 17"><path d="M0,3 H18 M0,8.5 H18 M0,14 H18" stroke="#c9c9c9" stroke-width="1.2"/><circle cx="6" cy="3" r="2.2" fill="#535353" stroke="#c9c9c9" stroke-width="1.2"/><circle cx="13" cy="8.5" r="2.2" fill="#535353" stroke="#c9c9c9" stroke-width="1.2"/><circle cx="7" cy="14" r="2.2" fill="#535353" stroke="#c9c9c9" stroke-width="1.2"/></svg>
<svg style="left:895px;top:171px" width="17" height="19" viewBox="0 0 17 19"><path d="M0.7,0 V19" stroke="#c9c9c9" stroke-width="1.4"/><rect x="3.5" y="3" width="8" height="5.5" fill="#c9c9c9"/><rect x="3.5" y="11" width="13" height="5.5" fill="#c9c9c9"/></svg>
<svg style="left:894px;top:216.5px" width="17" height="12" viewBox="0 0 17 12"><rect x="0.6" y="0.6" width="15.8" height="10.8" fill="#8a8a8a" stroke="#d0d0d0" stroke-width="1.2"/><path d="M0.6,6 H16.4 M5.9,0.6 V11.4 M11.2,0.6 V11.4" stroke="#d0d0d0" stroke-width="1.2"/></svg>
<svg style="left:893px;top:243px" width="19" height="15" viewBox="0 0 19 15"><path d="M9.5,0.5 C15,0.5 18.5,3.5 18.5,7 C18.5,10 16,11 13.5,10.5 C12,10.2 11.5,11.2 12,12.2 C12.5,13.5 11.5,14.5 9.5,14.5 C4,14.5 0.5,11 0.5,7.5 C0.5,3.5 4,0.5 9.5,0.5Z" fill="#c9c9c9"/><circle cx="5" cy="5" r="1.5" fill="#535353"/><circle cx="9.5" cy="3.5" r="1.5" fill="#535353"/><circle cx="14" cy="5" r="1.5" fill="#535353"/><circle cx="4.5" cy="9.5" r="1.5" fill="#535353"/><circle cx="8.5" cy="11.5" r="1.5" fill="#535353"/></svg>
<svg style="left:894.5px;top:270.5px" width="17" height="17" viewBox="0 0 17 17"><defs><radialGradient id="qg" cx="0" cy="1" r="1"><stop offset="0" stop-color="#2a2a2a"/><stop offset="1" stop-color="#e8e8e8"/></radialGradient></defs><path d="M0.6,0.6 A15.8,15.8 0 0 1 16.4,16.4 H0.6Z" fill="url(#qg)" stroke="#d0d0d0" stroke-width="1.2"/></svg>
<svg style="left:894px;top:312.5px" width="18" height="13" viewBox="0 0 18 13"><path d="M0,0.7 H18" stroke="#c9c9c9" stroke-width="1.2"/><path d="M0,5.7 H18" stroke="#c9c9c9" stroke-width="2.2"/><path d="M0,11.2 H18" stroke="#c9c9c9" stroke-width="3"/></svg>
<div class="a" style="left:894px;top:341px;width:17px;height:12px;box-sizing:border-box;border:1.2px solid #d0d0d0;background:linear-gradient(90deg,#2e2e2e,#e4e4e4);"></div>
<svg style="left:893px;top:379px" width="19" height="18" viewBox="0 0 19 18"><rect x="0.6" y="0.6" width="10.5" height="10.5" fill="#535353" stroke="#c9c9c9" stroke-width="1.2"/><rect x="5.6" y="7" width="12.5" height="10.4" fill="#5e5e5e" stroke="#c9c9c9" stroke-width="1.2"/></svg>
<div class="a" style="left:888px;top:406px;width:27px;height:21px;background:#2e2e2e;border-radius:2px;"></div>
<svg style="left:893px;top:408px" width="18" height="17" viewBox="0 0 18 17"><path d="M9,0.5 L17.5,5.5 L9,10.5 L0.5,5.5Z" fill="#e8e8e8"/><path d="M2.2,9.2 L9,13.2 L15.8,9.2 L17.5,10.3 L9,15.6 L0.5,10.3Z" fill="#e8e8e8"/></svg>
<svg style="left:894px;top:435.5px" width="17" height="17" viewBox="0 0 17 17"><rect x="0.6" y="2.6" width="12" height="13.8" fill="none" stroke="#c9c9c9" stroke-width="1.2"/><rect x="3.6" y="0.6" width="12.8" height="13.8" fill="#535353" stroke="#c9c9c9" stroke-width="1.2"/><path d="M9.5,0.6 H13.5 V8 L11.5,6.3 L9.5,8Z" fill="#c9c9c9"/></svg>



<!-- ===== LAYERS PANEL ===== -->
<div class="a" style="left:639px;top:362px;width:244px;height:299px;background:#3c3c3c;"></div>
<div class="a" style="left:641px;top:364px;width:240px;height:296px;background:#535353;"></div>
<div class="a" style="left:641px;top:364px;width:240px;height:3px;background:#4a4a4a;"></div><div class="a" style="left:645px;top:367px;width:236px;height:25px;background:#424242;"></div><div class="a" style="left:752px;top:368px;width:1px;height:24px;background:#3a3a3a;"></div><div class="a" style="left:817px;top:368px;width:1px;height:24px;background:#3a3a3a;"></div>
<div class="a" style="left:707px;top:366px;width:45px;height:27px;background:#535353;"></div>
<div class="t lt" style="left:650.5px;color:#a6a6a6;width:55.5px;overflow:hidden;">Mesas de tra</div>
<div class="t lt" style="left:715.5px;color:#f4f4f4;">Capas</div>
<div class="t lt" style="left:760.5px;color:#a6a6a6;">Bibliotecas</div>
<svg style="left:840.5px;top:375px" width="10" height="8" viewBox="0 0 10 8"><path d="M0.8,0.8 L4,4 L0.8,7.2 M5.6,0.8 L8.8,4 L5.6,7.2" fill="none" stroke="#d0d0d0" stroke-width="1.4"/></svg>
<div class="a" style="left:857px;top:372px;width:1px;height:14px;background:#8a8a8a;"></div>
<svg style="left:865px;top:375px" width="10" height="8" viewBox="0 0 10 8"><path d="M0,0.8 H10 M0,4 H10 M0,7.2 H10" stroke="#d0d0d0" stroke-width="1.2"/></svg>
<!-- list -->
<div class="a" id="llist" style="left:647px;top:400px;width:216px;height:232px;background:#4f4f4f;overflow:hidden;">
<div class="a" style="left:20px;top:0;width:1px;height:232px;background:#575757;"></div>
<div class="a" style="left:22px;top:0;width:1px;height:232px;background:#575757;"></div>
<div class="a" style="left:42px;top:0;width:1px;height:232px;background:#575757;"></div>
<div class="a" style="left:180px;top:0;width:1px;height:232px;background:#575757;"></div>
<div class="a" style="left:0;top:11.4px;width:216px;height:1px;background:#5c5c5c;"></div>
<div class="a" style="left:0;top:44.3px;width:216px;height:1px;background:#5c5c5c;"></div>
<div class="a" style="left:0;top:77.3px;width:216px;height:1px;background:#5c5c5c;"></div>
<div class="a" style="left:0;top:110.2px;width:216px;height:1px;background:#5c5c5c;"></div>
<div class="a" style="left:0;top:143.2px;width:216px;height:1px;background:#5c5c5c;"></div>
<div class="a" style="left:0;top:176.1px;width:216px;height:1px;background:#5c5c5c;"></div>
<div class="a" style="left:0;top:209.1px;width:216px;height:1px;background:#5c5c5c;"></div>
<div class="a" style="left:43px;top:0.0px;width:3.4px;height:10.4px;background:#4282ff;"></div>
<div class="a" style="left:43px;top:12.9px;width:3.4px;height:30.4px;background:#4282ff;"></div>
<div class="a" style="left:43px;top:45.8px;width:3.4px;height:30.4px;background:#4282ff;"></div>
<div class="a" style="left:43px;top:78.8px;width:3.4px;height:30.5px;background:#4282ff;"></div>
<div class="a" style="left:43px;top:111.8px;width:3.4px;height:30.5px;background:#4282ff;"></div>
<div class="a" style="left:43px;top:144.7px;width:3.4px;height:30.4px;background:#4282ff;"></div>
<div class="a" style="left:43px;top:177.6px;width:3.4px;height:30.5px;background:#4282ff;"></div>
<div class="a" style="left:43px;top:210.6px;width:3.4px;height:20.4px;background:#4282ff;"></div>
<svg style="left:3.0px;top:23.4px" width="13" height="9" viewBox="0 0 13 9"><path d="M0.3,4.5 C2.5,0.6 10.5,0.6 12.7,4.5 C10.5,8.4 2.5,8.4 0.3,4.5Z" fill="#d4d4d4"/><circle cx="6.5" cy="4.5" r="2.7" fill="#4f4f4f"/><circle cx="6.5" cy="4.5" r="1.3" fill="#d4d4d4"/></svg>
<svg style="left:3.0px;top:56.3px" width="13" height="9" viewBox="0 0 13 9"><path d="M0.3,4.5 C2.5,0.6 10.5,0.6 12.7,4.5 C10.5,8.4 2.5,8.4 0.3,4.5Z" fill="#d4d4d4"/><circle cx="6.5" cy="4.5" r="2.7" fill="#4f4f4f"/><circle cx="6.5" cy="4.5" r="1.3" fill="#d4d4d4"/></svg>
<svg style="left:3.0px;top:89.3px" width="13" height="9" viewBox="0 0 13 9"><path d="M0.3,4.5 C2.5,0.6 10.5,0.6 12.7,4.5 C10.5,8.4 2.5,8.4 0.3,4.5Z" fill="#d4d4d4"/><circle cx="6.5" cy="4.5" r="2.7" fill="#4f4f4f"/><circle cx="6.5" cy="4.5" r="1.3" fill="#d4d4d4"/></svg>
<svg style="left:3.0px;top:122.2px" width="13" height="9" viewBox="0 0 13 9"><path d="M0.3,4.5 C2.5,0.6 10.5,0.6 12.7,4.5 C10.5,8.4 2.5,8.4 0.3,4.5Z" fill="#d4d4d4"/><circle cx="6.5" cy="4.5" r="2.7" fill="#4f4f4f"/><circle cx="6.5" cy="4.5" r="1.3" fill="#d4d4d4"/></svg>
<svg style="left:3.0px;top:155.2px" width="13" height="9" viewBox="0 0 13 9"><path d="M0.3,4.5 C2.5,0.6 10.5,0.6 12.7,4.5 C10.5,8.4 2.5,8.4 0.3,4.5Z" fill="#d4d4d4"/><circle cx="6.5" cy="4.5" r="2.7" fill="#4f4f4f"/><circle cx="6.5" cy="4.5" r="1.3" fill="#d4d4d4"/></svg>
<svg style="left:3.0px;top:188.1px" width="13" height="9" viewBox="0 0 13 9"><path d="M0.3,4.5 C2.5,0.6 10.5,0.6 12.7,4.5 C10.5,8.4 2.5,8.4 0.3,4.5Z" fill="#d4d4d4"/><circle cx="6.5" cy="4.5" r="2.7" fill="#4f4f4f"/><circle cx="6.5" cy="4.5" r="1.3" fill="#d4d4d4"/></svg>
<svg style="left:3.0px;top:221.1px" width="13" height="9" viewBox="0 0 13 9"><path d="M0.3,4.5 C2.5,0.6 10.5,0.6 12.7,4.5 C10.5,8.4 2.5,8.4 0.3,4.5Z" fill="#d4d4d4"/><circle cx="6.5" cy="4.5" r="2.7" fill="#4f4f4f"/><circle cx="6.5" cy="4.5" r="1.3" fill="#d4d4d4"/></svg>
<svg style="left:122.5px;top:56.3px" width="6" height="9" viewBox="0 0 6 9"><path d="M1,0.8 L4.6,4.5 L1,8.2" stroke="#e6e6e6" stroke-width="1.6" fill="none"/></svg>
<svg style="left:122.5px;top:89.3px" width="6" height="9" viewBox="0 0 6 9"><path d="M1,0.8 L4.6,4.5 L1,8.2" stroke="#e6e6e6" stroke-width="1.6" fill="none"/></svg>
<svg style="left:186px;top:22.9px" width="10" height="10" viewBox="0 0 10 10"><circle cx="5" cy="5" r="3.6" fill="#8e8e8e" stroke="#b8b8b8" stroke-width="1.1"/></svg>
<svg style="left:186px;top:55.8px" width="10" height="10" viewBox="0 0 10 10"><circle cx="5" cy="5" r="3.6" fill="none" stroke="#c4c4c4" stroke-width="1.1"/></svg>
<svg style="left:186px;top:88.8px" width="10" height="10" viewBox="0 0 10 10"><circle cx="5" cy="5" r="3.6" fill="none" stroke="#c4c4c4" stroke-width="1.1"/></svg>
<svg style="left:186px;top:121.7px" width="10" height="10" viewBox="0 0 10 10"><circle cx="5" cy="5" r="3.6" fill="none" stroke="#c4c4c4" stroke-width="1.1"/></svg>
<svg style="left:186px;top:154.7px" width="10" height="10" viewBox="0 0 10 10"><circle cx="5" cy="5" r="3.6" fill="none" stroke="#c4c4c4" stroke-width="1.1"/></svg>
<svg style="left:186px;top:187.6px" width="10" height="10" viewBox="0 0 10 10"><circle cx="5" cy="5" r="3.6" fill="none" stroke="#c4c4c4" stroke-width="1.1"/></svg>
<svg style="left:186px;top:220.6px" width="10" height="10" viewBox="0 0 10 10"><circle cx="5" cy="5" r="3.6" fill="none" stroke="#c4c4c4" stroke-width="1.1"/></svg>
<svg style="left:141px;top:-19.9px" width="30" height="30" viewBox="0 0 30 30"><rect x="0.5" y="0.5" width="29" height="29" fill="#fff" stroke="#111" stroke-width="1"/></svg>
<svg style="left:141px;top:13.1px" width="30" height="30" viewBox="0 0 30 30"><rect x="0.5" y="0.5" width="29" height="29" fill="#fff" stroke="#111" stroke-width="1"/><defs><linearGradient id="tn" x1="0" y1="0" x2="0" y2="1"><stop offset="0" stop-color="#f983b0"/><stop offset="1" stop-color="#c0559c"/></linearGradient></defs><path d="M3,4 L27,4 Q29,4 28,6 L16.5,24 Q15,26 13.5,24 L2,6 Q1,4 3,4Z" fill="url(#tn)"/></svg>
<svg style="left:141px;top:46.0px" width="30" height="30" viewBox="0 0 30 30"><rect x="0.5" y="0.5" width="29" height="29" fill="#fff" stroke="#111" stroke-width="1"/><circle cx="15" cy="15" r="13.4" fill="#fbb0cf"/><circle cx="15" cy="15" r="10.8" fill="#f78cb8"/><circle cx="15" cy="15" r="8.2" fill="#6d0a5e"/><circle cx="15" cy="15" r="5" fill="#560650"/><circle cx="16.2" cy="11" r="3" fill="#fff"/><circle cx="19" cy="16.3" r="1.2" fill="#fff"/></svg>
<svg style="left:141px;top:79.0px" width="30" height="30" viewBox="0 0 30 30"><rect x="0.5" y="0.5" width="29" height="29" fill="#fff" stroke="#111" stroke-width="1"/><circle cx="15" cy="15" r="13.4" fill="#fbb0cf"/><circle cx="15" cy="15" r="10.8" fill="#f78cb8"/><circle cx="15" cy="15" r="8.2" fill="#6d0a5e"/><circle cx="15" cy="15" r="5" fill="#560650"/><circle cx="16.2" cy="11" r="3" fill="#fff"/><circle cx="19" cy="16.3" r="1.2" fill="#fff"/></svg>
<svg style="left:141px;top:111.9px" width="30" height="30" viewBox="0 0 30 30"><rect x="0.5" y="0.5" width="29" height="29" fill="#fff" stroke="#111" stroke-width="1"/><path d="M3,27 C8,17 16,9 27,4 C18,11 10,19 3,27Z" fill="#fdd6e6"/><path d="M4,26 C10,17 17,10 26,5" stroke="#fde3ee" stroke-width="3" fill="none"/></svg>
<svg style="left:141px;top:144.9px" width="30" height="30" viewBox="0 0 30 30"><rect x="0.5" y="0.5" width="29" height="29" fill="#fff" stroke="#111" stroke-width="1"/><path d="M3,27.5 C5,16 13,6 25,2 C28,2 29,5 27,7 C19,11 11,19 7,28Z" fill="#fbb0cf"/></svg>
<svg style="left:141px;top:177.9px" width="30" height="30" viewBox="0 0 30 30"><rect x="0.5" y="0.5" width="29" height="29" fill="#fff" stroke="#111" stroke-width="1"/><path d="M4,3 C13,6 22,14 27,27 C21,17 14,9 4,3Z" fill="#fbc4da"/><path d="M6,4.5 C13,8 20,15 26,25" stroke="#fde3ee" stroke-width="2.4" fill="none"/></svg>
<svg style="left:141px;top:210.8px" width="30" height="30" viewBox="0 0 30 30"><rect x="0.5" y="0.5" width="29" height="29" fill="#fff" stroke="#111" stroke-width="1"/><path d="M2,3 C12,4 22,11 28,24 L28,29 L22,29 C18,18 11,10 2,6Z" fill="#fbb0cf"/></svg>
</div>

<div class="a" style="left:863px;top:400px;width:12px;height:232px;background:#595959;"></div>
<svg style="left:864.5px;top:402.5px" width="9" height="6" viewBox="0 0 9 6"><path d="M1,5 L4.5,1.5 L8,5" stroke="#b0b0b0" stroke-width="1.5" fill="none"/></svg>
<svg style="left:864.5px;top:624px" width="9" height="6" viewBox="0 0 9 6"><path d="M1,1 L4.5,4.5 L8,1" stroke="#b0b0b0" stroke-width="1.5" fill="none"/></svg>
<div class="a" style="left:864px;top:514px;width:10px;height:52px;background:#727272;border-radius:5px;"></div>
<!-- footer -->
<div class="t" style="left:646.5px;top:637.5px;font-size:10px;color:#dcdcdc;letter-spacing:-0.15px;">1 capa</div>
<svg style="left:712px;top:636px" width="13" height="13" viewBox="0 0 13 13"><path d="M5,2.5 H0.7 V12.3 H10.5 V8" fill="none" stroke="#c9c9c9" stroke-width="1.3"/><path d="M6,7 L12,1 M8,0.7 H12.3 V5" fill="none" stroke="#c9c9c9" stroke-width="1.3"/></svg>
<svg style="left:738px;top:636px" width="13" height="13" viewBox="0 0 13 13"><circle cx="4.8" cy="4.8" r="3.9" fill="none" stroke="#c9c9c9" stroke-width="1.4"/><path d="M7.6,7.6 L12,12" stroke="#c9c9c9" stroke-width="2"/></svg>
<svg style="left:763px;top:637px" width="12" height="12" viewBox="0 0 12 12"><rect x="0.6" y="0.6" width="8" height="8" fill="#535353" stroke="#c9c9c9" stroke-width="1.2"/><rect x="3.4" y="3.4" width="8" height="8" fill="#8c8c8c" stroke="#c9c9c9" stroke-width="1.2"/><rect x="3.4" y="3.4" width="5.2" height="5.2" fill="#d0d0d0"/></svg>
<svg style="left:788px;top:637px" width="15" height="12" viewBox="0 0 15 12"><path d="M0,2 H3 V0 M3,2 V6 H5" fill="none" stroke="#6a6a6a" stroke-width="1.1"/><rect x="5.6" y="2.6" width="8.8" height="8.8" fill="none" stroke="#6a6a6a" stroke-width="1.1"/><path d="M10,4.6 V9.4 M7.6,7 H12.4" stroke="#6a6a6a" stroke-width="1.1"/></svg>
<svg style="left:816.5px;top:637px" width="12" height="12" viewBox="0 0 12 12"><rect x="0.6" y="0.6" width="10.8" height="10.8" fill="none" stroke="#c9c9c9" stroke-width="1.2"/><path d="M6,3 V9 M3,6 H9" stroke="#c9c9c9" stroke-width="1.2"/></svg>
<svg style="left:841px;top:636px" width="12" height="14" viewBox="0 0 12 14"><path d="M0,2.6 H12 M4,2.4 V0.6 H8 V2.4" fill="none" stroke="#c9c9c9" stroke-width="1.2"/><path d="M1.6,4 L2.2,13.4 H9.8 L10.4,4" fill="none" stroke="#c9c9c9" stroke-width="1.2"/><path d="M4.2,5 V12 M6,5 V12 M7.8,5 V12" stroke="#c9c9c9" stroke-width="1"/></svg>
<div class="a" style="left:641px;top:654px;width:240px;height:1px;background:#474747;"></div>
<div class="a" style="left:751px;top:655.5px;width:20px;height:3.5px;background:repeating-linear-gradient(90deg,#3d3d3d 0,#3d3d3d 1px,transparent 1px,transparent 2px);"></div>


</body>
</html>
